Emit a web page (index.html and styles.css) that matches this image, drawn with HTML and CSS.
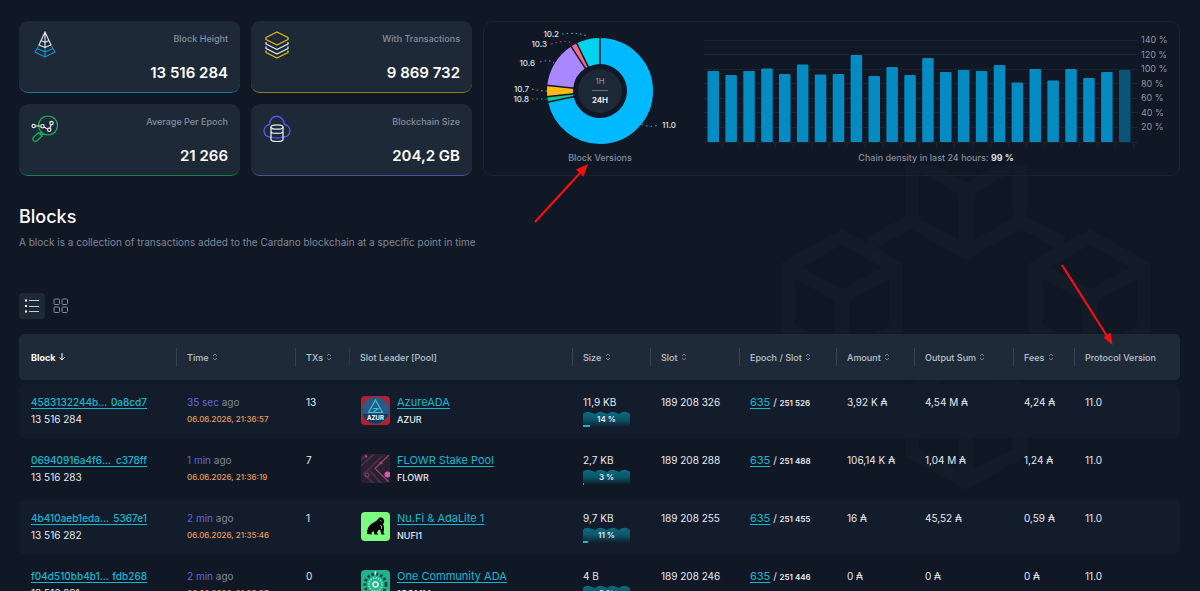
FILE: index.html
```
<!DOCTYPE html>
<html lang="en">
<head>
<meta charset="utf-8">
<title>Blocks</title>
<link rel="stylesheet" href="styles.css">
</head>
<body>
<svg class="symbols" aria-hidden="true">
  <symbol id="sort" viewBox="0 0 6 8"><path d="M1 3 3 1l2 2M1 5l2 2 2-2" fill="none" stroke="currentColor" stroke-width=".8"/></symbol>
  <symbol id="wave" viewBox="0 0 47 16"><path d="M0 3Q3 0 6 1T12 3Q16 0 19 1T24 3Q28 0 31 1T36 3Q40 0 43 1T47 3V16H0Z" fill="url(#waveFill)"/></symbol>
  <linearGradient id="waveFill" x1="0" y1="0" x2="0" y2="1"><stop offset="0" stop-color="#0b6c80"/><stop offset=".5" stop-color="#0b5568"/><stop offset="1" stop-color="#0b5568" stop-opacity="0"/></linearGradient>
</svg>
<svg class="backdrop" viewBox="0 0 380 340" aria-hidden="true">
  <g fill="none" stroke="#1d2530" stroke-width="14" opacity=".28">
    <path d="M133 -5V57L187 87L241 57V-5M133 -5L187 25L241 -5M187 25V87"/>
    <path d="M9 102L63 72L117 102V164L63 194L9 164ZM9 102L63 132L117 102M63 132V194"/>
    <path d="M257 102L311 72L365 102V164L311 194L257 164ZM257 102L311 132L365 102M311 132V194"/>
    <path d="M133 225L187 195L241 225V287L187 317L133 287ZM133 225L187 255L241 225M187 255V317"/>
    <path d="M90 79L140 52M284 79L234 52"/>
  </g>
</svg>

<main class="page">
  <section class="overview">
    <article class="stat stat-blue">
      <svg class="stat-icon" viewBox="0 0 28 28" fill="none" stroke-width="1.1"><g stroke="#1596cf"><path d="M7.600 15 4 21l10 5 10-5-3.600-6M14 15v11M6 17.500l8 3.500 8-3.500"/></g><g stroke="#e4e8ee"><path d="M14 1 8 14l6 2.500 6-2.500ZM14 1v15M10 9.500l4 2 4-2"/></g></svg>
      <div class="stat-text"><h2>Block Height</h2><p>13 516 284</p></div>
    </article>
    <article class="stat stat-gold">
      <svg class="stat-icon" viewBox="0 0 28 28" fill="none" stroke-width="1.300" stroke-linejoin="round"><path stroke="#e8bd13" d="M14 1 25 6.500v2L14 14 3 8.500v-2ZM3 19.500v2L14 27l11-5.500v-2"/><path stroke="#e4e8ee" d="M3 11v2l11 5.500L25 13v-2M3 15.500v2L14 23l11-5.500v-2"/></svg>
      <div class="stat-text"><h2>With Transactions</h2><p>9 869 732</p></div>
    </article>
    <article class="stat stat-green">
      <svg class="stat-icon" viewBox="0 0 28 28" fill="none" stroke-width="1.200"><g stroke="#12b85a"><circle cx="17" cy="11.500" r="9.500"/><path d="m10.500 18-2 2M12.500 19.500l-2 2M7.500 18.500l3.500 3.500-5 4.700c-2.500 1.800-5.500-1-3.500-3.500Z"/></g><g stroke="#e9edf2"><path d="M4.500 12h5M13 13l3.500 2M19 14l1-3"/><circle cx="2.700" cy="12" r="1.700"/><circle cx="11.500" cy="12.200" r="1.700"/><circle cx="18.200" cy="15.800" r="1.700"/><circle cx="20.500" cy="9" r="1.700"/></g></svg>
      <div class="stat-text"><h2>Average Per Epoch</h2><p>21 266</p></div>
    </article>
    <article class="stat stat-violet">
      <svg class="stat-icon" viewBox="0 0 28 28" fill="none" stroke-width="1.300"><path stroke="#5f57f0" d="M8 23C-1 23-1 12 6.500 10.500 7-.5 20-.5 21.500 10.500 29 12 29 23 20 23c-3 1.200-8 1.200-12 0"/><g stroke="#e4e8ee"><ellipse cx="14" cy="13" rx="6" ry="2.200"/><path d="M8 13v12.500c0 2.700 12 2.700 12 0V13M8 17.500c0 2.500 12 2.500 12 0"/></g></svg>
      <div class="stat-text"><h2>Blockchain Size</h2><p>204,2 GB</p></div>
    </article>

    <section class="panel">
      <figure class="versions">
        <div class="donut">
          <svg viewBox="0 0 208 122" role="img" aria-label="Block versions">
            <g fill="none" stroke-width="26" transform="rotate(-90 104 61)">
              <circle cx="104" cy="61" r="40" pathLength="360" stroke="#00b9ff" stroke-dasharray="258 102"/>
              <circle cx="104" cy="61" r="40" pathLength="360" stroke="#13c79a" stroke-dasharray="0 258 6 96"/>
              <circle cx="104" cy="61" r="40" pathLength="360" stroke="#ffb911" stroke-dasharray="0 264 12 84"/>
              <circle cx="104" cy="61" r="40" pathLength="360" stroke="#a987ff" stroke-dasharray="0 276 51 33"/>
              <circle cx="104" cy="61" r="40" pathLength="360" stroke="#ff6685" stroke-dasharray="0 327 7 26"/>
              <circle cx="104" cy="61" r="40" pathLength="360" stroke="#00d3ee" stroke-dasharray="0 334 26 0"/>
            </g>
            <g stroke="#101725" stroke-width="1.500">
              <path d="M104 35V7"/>
              <path d="M104 35V7" transform="rotate(258 104 61)"/>
              <path d="M104 35V7" transform="rotate(264 104 61)"/>
              <path d="M104 35V7" transform="rotate(276 104 61)"/>
              <path d="M104 35V7" transform="rotate(327 104 61)"/>
              <path d="M104 35V7" transform="rotate(334 104 61)"/>
            </g>
            <g class="leaders">
              <path stroke="#1fa5c0" d="M66 4Q84 2 90 6"/>
              <path stroke="#b94c68" d="M55 14Q72 9 77 14"/>
              <path stroke="#8270bd" d="M44 32Q54 29 58 33"/>
              <path stroke="#b98b24" d="M36 59Q44 61 51 61"/>
              <path stroke="#1aa084" d="M36 69H51"/>
              <path stroke="#1890c4" d="M146 94Q153 98 163 95"/>
            </g>
            <g class="version-labels">
              <text x="63" y="7" text-anchor="end">10.2</text>
              <text x="51" y="17" text-anchor="end">10.3</text>
              <text x="39" y="36" text-anchor="end">10.6</text>
              <text x="33" y="62" text-anchor="end">10.7</text>
              <text x="33" y="72" text-anchor="end">10.8</text>
              <text x="166" y="98">11.0</text>
            </g>
          </svg>
          <div class="period">
            <button type="button">1H</button>
            <button type="button" class="active" aria-pressed="true">24H</button>
          </div>
        </div>
        <figcaption>Block Versions</figcaption>
      </figure>
      <figure class="density">
        <svg viewBox="0 0 464 122" role="img" aria-label="Chain density by hour">
          <path class="grid-lines" d="M0 10.500H434M0 24.500H434M0 39.500H434M0 53.500H434M0 68.500H434M0 82.500H434M0 97.500H434M0 112.500H434"/>
          <path class="grid-lines" stroke-dasharray="1 16.890" stroke-width="5" d="M17.500 115H434"/>
          <g fill="#048cc2">
            <rect x="3.500" y="41" width="11.500" height="71" rx="1"/><rect x="21.400" y="45" width="11.500" height="67" rx="1"/><rect x="39.300" y="41" width="11.500" height="71" rx="1"/><rect x="57.200" y="38.500" width="11.500" height="73.500" rx="1"/><rect x="75" y="44" width="11.500" height="68" rx="1"/><rect x="92.900" y="34.500" width="11.500" height="77.500" rx="1"/><rect x="110.800" y="44.500" width="11.500" height="67.500" rx="1"/><rect x="128.700" y="44" width="11.500" height="68" rx="1"/><rect x="146.600" y="25" width="11.500" height="87" rx="1"/><rect x="164.500" y="46" width="11.500" height="66" rx="1"/><rect x="182.400" y="37" width="11.500" height="75" rx="1"/><rect x="200.300" y="45" width="11.500" height="67" rx="1"/><rect x="218.200" y="28" width="11.500" height="84" rx="1"/><rect x="236" y="42" width="11.500" height="70" rx="1"/><rect x="253.900" y="40" width="11.500" height="72" rx="1"/><rect x="271.800" y="41" width="11.500" height="71" rx="1"/><rect x="289.700" y="35" width="11.500" height="77" rx="1"/><rect x="307.600" y="52.500" width="11.500" height="59.500" rx="1"/><rect x="325.500" y="39" width="11.500" height="73" rx="1"/><rect x="343.400" y="50.500" width="11.500" height="61.500" rx="1"/><rect x="361.300" y="39" width="11.500" height="73" rx="1"/><rect x="379.200" y="48" width="11.500" height="64" rx="1"/><rect x="397.100" y="42" width="11.500" height="70" rx="1"/><rect x="415" y="40" width="11.500" height="72" rx="1" fill="#0a5478"/>
          </g>
          <g class="axis"><text x="437" y="13">140 %</text><text x="437" y="28">120 %</text><text x="437" y="42">100 %</text><text x="437" y="57">80 %</text><text x="437" y="71">60 %</text><text x="437" y="86">40 %</text><text x="437" y="100">20 %</text></g>
        </svg>
        <figcaption>Chain density in last 24 hours: <strong>99 %</strong></figcaption>
      </figure>
    </section>
  </section>

  <h1>Blocks</h1>
  <p class="lead">A block is a collection of transactions added to the Cardano blockchain at a specific point in time</p>

  <div class="views">
    <button type="button" class="view active" aria-label="List view"><svg viewBox="0 0 16 16" fill="none" stroke="#c6cdd6"><path d="M5 2.500h10M5 8.500h10M5 13.500h10"/><path stroke="#fff" stroke-width="2" d="M1 2.500h2M1 8h2M1 13.500h2"/></svg></button>
    <button type="button" class="view" aria-label="Grid view"><svg viewBox="0 0 16 16" fill="none" stroke="#848c99"><rect x="1" y="1" width="5.500" height="5.500" rx="1"/><rect x="9" y="1" width="5.500" height="5.500" rx="1"/><rect x="1" y="9" width="5.500" height="5.500" rx="1"/><rect x="9" y="9" width="5.500" height="5.500" rx="1"/></svg></button>
  </div>

  <table class="blocks">
    <colgroup><col class="c-block"><col class="c-time"><col class="c-txs"><col class="c-pool"><col class="c-size"><col class="c-slot"><col class="c-epoch"><col class="c-amount"><col class="c-output"><col class="c-fees"><col class="c-protocol"></colgroup>
    <thead>
      <tr>
        <th class="sorted">Block <svg class="down" viewBox="0 0 6 8"><path d="M3 0v7M.5 4.500 3 7l2.500-2.500" fill="none" stroke="currentColor"/></svg></th>
        <th>Time <svg class="sort"><use href="#sort"/></svg></th>
        <th>TXs <svg class="sort"><use href="#sort"/></svg></th>
        <th>Slot Leader [Pool]</th>
        <th>Size <svg class="sort"><use href="#sort"/></svg></th>
        <th>Slot <svg class="sort"><use href="#sort"/></svg></th>
        <th>Epoch / Slot <svg class="sort"><use href="#sort"/></svg></th>
        <th>Amount <svg class="sort"><use href="#sort"/></svg></th>
        <th>Output Sum <svg class="sort"><use href="#sort"/></svg></th>
        <th>Fees <svg class="sort"><use href="#sort"/></svg></th>
        <th>Protocol Version</th>
      </tr>
    </thead>
    <tbody>
      <tr>
        <td><a class="hash" href="#"><span>4583132244b...</span><span>0a8cd7</span></a><div class="height">13 516 284</div></td>
        <td><div class="ago"><b>35 sec</b> ago</div><time>06.06.2026, 21:36:57</time></td>
        <td>13</td>
        <td><div class="pool"><svg class="avatar" viewBox="0 0 29 29"><rect width="29" height="29" fill="#b3202c"/><circle cx="14.500" cy="14.500" r="13.500" fill="#285a88"/><path d="M1.500 18h26a13.500 13.500 0 0 1-26 0" fill="#17395f"/><path d="M14.500 4 7.500 16.500h14ZM12 12.500h5l-5 4" fill="none" stroke="#36c3d4" stroke-width="1.200"/><text x="14.500" y="23.500" text-anchor="middle">AZUR</text></svg><div><a href="#">AzureADA</a><div class="ticker">AZUR</div></div></div></td>
        <td>11,9 KB<div class="fill"><svg><use href="#wave"/></svg><span>14 %</span><i style="width:14%"></i></div></td>
        <td>189 208 326</td>
        <td><a href="#">635</a> / <small>251 526</small></td>
        <td>3,92 K ₳</td><td>4,54 M ₳</td><td>4,24 ₳</td><td>11.0</td>
      </tr>
      <tr>
        <td><a class="hash" href="#"><span>06940916a4f6...</span><span>c378ff</span></a><div class="height">13 516 283</div></td>
        <td><div class="ago"><b>1 min</b> ago</div><time>06.06.2026, 21:36:19</time></td>
        <td>7</td>
        <td><div class="pool"><svg class="avatar" viewBox="0 0 29 29"><rect width="29" height="29" fill="#2a2030"/><g fill="none" stroke="#443040" stroke-width="2"><path d="M0 12 13 0M3 20 21 2M0 6l6-6M12 29 2 19M20 29 9 17"/></g><path d="M28 1 14 14.500 28 28" fill="none" stroke="#9b4279" stroke-width="1.200"/><circle cx="26.500" cy="20.500" r="3" fill="#d45caa"/><circle cx="20" cy="9" r="1.500" fill="#ac437e"/><circle cx="6" cy="21" r="2" fill="none" stroke="#8c4671"/><circle cx="5" cy="2.500" r="1.200" fill="#a8497c"/></svg><div><a href="#">FLOWR Stake Pool</a><div class="ticker">FLOWR</div></div></div></td>
        <td>2,7 KB<div class="fill"><svg><use href="#wave"/></svg><span>3 %</span><i style="width:3%"></i></div></td>
        <td>189 208 288</td>
        <td><a href="#">635</a> / <small>251 488</small></td>
        <td>106,14 K ₳</td><td>1,04 M ₳</td><td>1,24 ₳</td><td>11.0</td>
      </tr>
      <tr>
        <td><a class="hash" href="#"><span>4b410aeb1eda...</span><span>5367e1</span></a><div class="height">13 516 282</div></td>
        <td><div class="ago"><b>2 min</b> ago</div><time>06.06.2026, 21:35:46</time></td>
        <td>1</td>
        <td><div class="pool"><svg class="avatar" viewBox="0 0 29 29"><rect width="29" height="29" fill="#7dfb80"/><path d="M6 22c0-4 1-8 5-10.500 3-1.700 5-2.500 6-4.500 1-2 5-2 5.700.500.800 1.500.600 3-.700 4.500 1.500 2.500 1 6 .500 8.500l1 2h-3l-1.500-5-2 1-1 2.500 1.500 1.500h-4l-1-3.500-2 1.500.500 2Z"/><path d="M19 8.500l1.500.500M19 13l1.500 1v3" stroke="#7dfb80" stroke-width=".8" fill="none"/></svg><div><a href="#">Nu.Fi &amp; AdaLite 1</a><div class="ticker">NUFI1</div></div></div></td>
        <td>9,7 KB<div class="fill"><svg><use href="#wave"/></svg><span>11 %</span><i style="width:11%"></i></div></td>
        <td>189 208 255</td>
        <td><a href="#">635</a> / <small>251 455</small></td>
        <td>16 ₳</td><td>45,52 ₳</td><td>0,59 ₳</td><td>11.0</td>
      </tr>
      <tr>
        <td><a class="hash" href="#"><span>f04d510bb4b1...</span><span>fdb268</span></a><div class="height">13 516 281</div></td>
        <td><div class="ago"><b>2 min</b> ago</div><time>06.06.2026, 21:35:37</time></td>
        <td>0</td>
        <td><div class="pool"><svg class="avatar" viewBox="0 0 29 29"><rect width="29" height="29" fill="#22b28a"/><g fill="none"><circle cx="14.500" cy="14.500" r="10.500" stroke="#0d4a49" stroke-width="3" stroke-dasharray="2.500 2"/><circle cx="14.500" cy="14.500" r="6.500" stroke="#b3f2d7" stroke-width="2" stroke-dasharray="1 1.500"/><circle cx="14.500" cy="14.500" r="2.500" stroke="#e4fff4" stroke-width="1.500"/><path d="M14.500 1.500v3" stroke="#fff" stroke-width="1.500"/></g></svg><div><a href="#">One Community ADA</a><div class="ticker">1COMM</div></div></div></td>
        <td>4 B<div class="fill"><svg><use href="#wave"/></svg><span>0 %</span><i style="width:0%"></i></div></td>
        <td>189 208 246</td>
        <td><a href="#">635</a> / <small>251 446</small></td>
        <td>0 ₳</td><td>0 ₳</td><td>0 ₳</td><td>11.0</td>
      </tr>
    </tbody>
  </table>
</main>

<svg class="arrow arrow-versions" viewBox="0 0 56 62" aria-hidden="true"><path d="M2 60 48 10" stroke="#f80e0e" stroke-width="2.200"/><path d="M55 2 50.500 14.500 43 7.500Z" fill="#f80e0e"/></svg>
<svg class="arrow arrow-protocol" viewBox="0 0 54 84" aria-hidden="true"><path d="M2 2 47 73" stroke="#f80e0e" stroke-width="2.200"/><path d="M52.500 82 43.500 74.500 50.500 69.500Z" fill="#f80e0e"/></svg>
</body>
</html>
```
FILE: styles.css
```
* { box-sizing: border-box; }
body {
  margin: 0;
  position: relative;
  background: #101725;
  color: #e6eaf0;
  font-family: Inter, "Liberation Sans", sans-serif;
  font-size: 10px;
  overflow-x: hidden;
}
h1, h2, p, figure { margin: 0; font-weight: 400; }
button { font: inherit; color: inherit; border: 0; padding: 0; background: none; cursor: pointer; }
.symbols { position: absolute; width: 0; height: 0; }
.backdrop { position: absolute; top: 165px; right: 41px; width: 380px; height: 340px; z-index: -1; }
.page { padding: 21px 20px 0 19px; }

.overview {
  display: grid;
  grid-template-columns: 221fr 221fr 697fr;
  grid-template-rows: 72px 72px;
  gap: 11px;
}
.stat {
  display: flex;
  justify-content: space-between;
  padding: 10px 12px 0;
  border-radius: 9px;
  border-bottom: 1px solid;
  background: #1e2937;
}
.stat-blue { border-color: #17779f; }
.stat-gold { border-color: #94791b; }
.stat-green { border-color: #19834f; }
.stat-violet { border-color: #4b529b; }
.stat-icon { width: 28px; height: 28px; }
.stat-text { text-align: right; }
.stat h2 { font-size: 9px; line-height: 16px; font-weight: 500; color: #858e9b; }
.stat p { margin-top: 16px; font-size: 15px; line-height: 20px; font-weight: 600; color: #fff; }

.panel {
  grid-column: 3;
  grid-row: 1 / 3;
  display: grid;
  grid-template-columns: 220px 1fr;
  padding: 8px 11px 0 0;
  border: 1px solid #1a2230;
  border-radius: 9px;
}
.panel figcaption { text-align: center; font-size: 9px; line-height: 12px; font-weight: 500; color: #858e9b; }
.panel figcaption strong { font-weight: 600; color: #e6eaf0; }
.panel svg { display: block; width: 100%; overflow: visible; }
.versions { padding-left: 12px; }
.donut { display: grid; }
.donut > * { grid-area: 1 / 1; }
.leaders { fill: none; stroke-width: 1.2; stroke-dasharray: 1.5 3; }
.version-labels { font-size: 8px; font-weight: 500; fill: #dfe4ea; }
.axis { font-size: 9px; fill: #8c95a2; }
.grid-lines { fill: none; stroke: #1b2331; }
.period {
  place-self: center;
  width: 44px;
  height: 44px;
  display: flex;
  flex-direction: column;
  align-items: center;
  justify-content: center;
  border-radius: 50%;
  background: #1e2937;
  font-size: 8px;
  line-height: 9px;
  color: #8c95a2;
}
.period .active {
  margin-top: 4px;
  padding-top: 5px;
  border-top: 1px solid #66707d;
  color: #fff;
  font-weight: 600;
}

h1 { margin-top: 28px; font-size: 18px; line-height: 25px; font-weight: 500; color: #fff; }
.lead { margin-top: 5px; line-height: 16px; color: #7f8895; }
.views { display: flex; gap: 3px; margin-top: 43px; }
.view { display: grid; place-items: center; width: 26px; height: 26px; border-radius: 4px; }
.view.active { background: #1e2937; }
.view svg { width: 16px; height: 16px; }

.blocks {
  width: 100%;
  margin-top: 11px;
  table-layout: fixed;
  border-collapse: separate;
  border-spacing: 0 4px;
}
.c-block { width: 157px; }
.c-time { width: 119px; }
.c-txs { width: 54px; }
.c-pool { width: 223px; }
.c-size, .c-amount { width: 78px; }
.c-slot { width: 89px; }
.c-epoch { width: 97px; }
.c-output { width: 99px; }
.c-fees { width: 61px; }
.c-protocol { width: 106px; }
.blocks th {
  height: 46px;
  padding: 0 0 0 11px;
  text-align: left;
  font-size: 9px;
  font-weight: 500;
  white-space: nowrap;
  color: #bcc4ce;
  background: linear-gradient(#36424f, #36424f) 0 50% / 1px 18px no-repeat, #1f2a38;
}
.blocks th.sorted { font-weight: 700; color: #fff; background: #1f2a38; }
.blocks th:nth-child(4) { background-image: linear-gradient(#2a3542, #2a3542); }
.sort { width: 6px; height: 8px; margin-left: 1px; color: #8c95a2; }
.down { width: 6px; height: 8px; margin-left: 1px; }
.blocks td {
  height: 54px;
  padding: 10px 0 0 11px;
  vertical-align: top;
  line-height: 17px;
  white-space: nowrap;
}
.blocks tbody tr:nth-child(odd) td { background: #131c2b; }
.blocks tr > :first-child { border-radius: 5px 0 0 5px; padding-left: 12px; }
.blocks tr > :last-child { border-radius: 0 5px 5px 0; }
.blocks a { color: #12b9d0; font-size: 11px; text-underline-offset: 2px; }
.blocks a.hash {
  display: flex;
  justify-content: space-between;
  width: 116px;
  height: 14px;
  margin: 1px 0 2px;
  line-height: 14px;
  text-decoration: none;
  border-bottom: 1px solid;
  font-size: 10px;
  font-weight: 500;
}
.height { font-size: 10px; }
.ago { color: #7f8895; }
.ago b { font-weight: 400; color: #6366d8; }
time { display: block; font-size: 8px; font-weight: 500; color: #e59d5c; }
.blocks small { font-size: 8px; font-weight: 600; }
.pool { display: flex; gap: 7px; padding-left: 1px; }
.avatar { width: 29px; height: 29px; margin-top: 2px; border-radius: 4px; flex: none; }
.avatar text { font-size: 6px; font-weight: 700; fill: #fff; }
.ticker { font-size: 9px; font-weight: 500; }
.fill { position: relative; width: 47px; height: 16px; text-align: center; font-size: 8px; line-height: 16px; font-weight: 600; }
.fill svg { position: absolute; inset: 0; width: 47px; height: 16px; }
.fill span { position: relative; }
.fill i { position: absolute; left: 0; bottom: 0; height: 2px; background: #12b9d0; }

.arrow { position: absolute; }
.arrow-versions { left: 533px; top: 162px; width: 56px; height: 62px; }
.arrow-protocol { left: 1060px; top: 263px; width: 54px; height: 84px; }
```
